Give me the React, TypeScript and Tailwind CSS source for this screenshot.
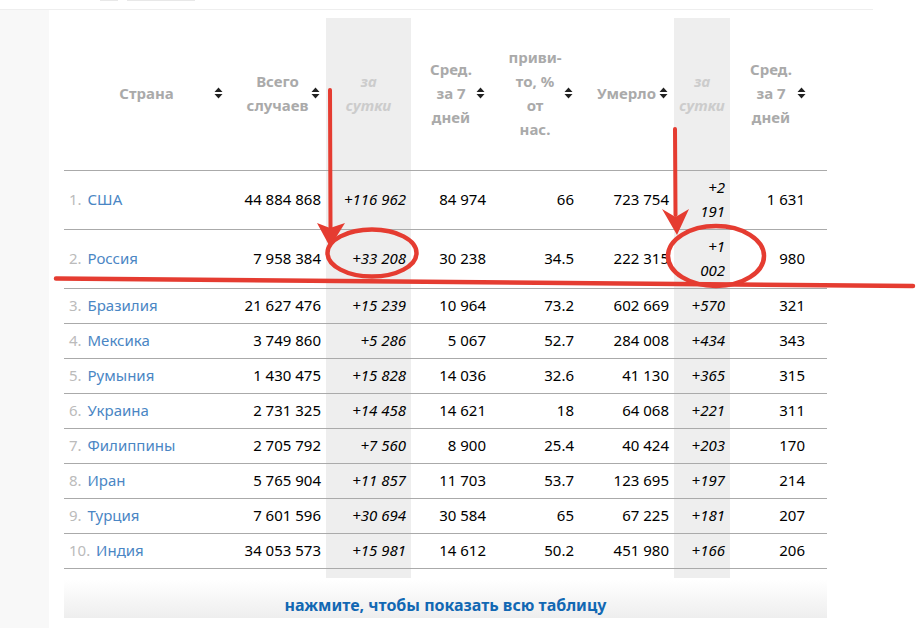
const rows = [
  { n: 1, name: 'США', total: '44 884 868', day: '+116 962', avg: '84 974', vac: '66', dead: '723 754', deadDay: '+2 191', deadAvg: '1 631' },
  { n: 2, name: 'Россия', total: '7 958 384', day: '+33 208', avg: '30 238', vac: '34.5', dead: '222 315', deadDay: '+1 002', deadAvg: '980' },
  { n: 3, name: 'Бразилия', total: '21 627 476', day: '+15 239', avg: '10 964', vac: '73.2', dead: '602 669', deadDay: '+570', deadAvg: '321' },
  { n: 4, name: 'Мексика', total: '3 749 860', day: '+5 286', avg: '5 067', vac: '52.7', dead: '284 008', deadDay: '+434', deadAvg: '343' },
  { n: 5, name: 'Румыния', total: '1 430 475', day: '+15 828', avg: '14 036', vac: '32.6', dead: '41 130', deadDay: '+365', deadAvg: '315' },
  { n: 6, name: 'Украина', total: '2 731 325', day: '+14 458', avg: '14 621', vac: '18', dead: '64 068', deadDay: '+221', deadAvg: '311' },
  { n: 7, name: 'Филиппины', total: '2 705 792', day: '+7 560', avg: '8 900', vac: '25.4', dead: '40 424', deadDay: '+203', deadAvg: '170' },
  { n: 8, name: 'Иран', total: '5 765 904', day: '+11 857', avg: '11 703', vac: '53.7', dead: '123 695', deadDay: '+197', deadAvg: '214' },
  { n: 9, name: 'Турция', total: '7 601 596', day: '+30 694', avg: '30 584', vac: '65', dead: '67 225', deadDay: '+181', deadAvg: '207' },
  { n: 10, name: 'Индия', total: '34 053 573', day: '+15 981', avg: '14 612', vac: '50.2', dead: '451 980', deadDay: '+166', deadAvg: '206' },
]

function SortIcon({ className }: { className: string }) {
  return (
    <svg width="9" height="12" viewBox="0 0 9 12" className={className}>
      <path d="M4.5 0.5 L8.5 5 H0.5 Z M0.5 7 H8.5 L4.5 11.5 Z" fill="#222" />
    </svg>
  )
}

function Head({ children, last }: { children: React.ReactNode; last?: boolean }) {
  return (
    <th className={`relative h-[153px] pt-[5px] pb-[8px] pl-[5px] border-b border-[#aaa] text-center align-middle font-bold text-[#aaa] ${last ? 'pr-[20px]' : 'pr-[5px]'}`}>
      {children}
      <SortIcon className={`absolute top-[69px] ${last ? 'right-[21px]' : 'right-[6px]'}`} />
    </th>
  )
}

function DayHead() {
  return (
    <th className="h-[153px] pt-[5px] pb-[8px] px-[5px] border-b border-[#aaa] bg-[#eee] text-center align-middle font-bold italic text-[#ccc]">
      за<br />сутки
    </th>
  )
}

export default function App() {
  const cell = 'pt-[4px] pb-[6px] pl-[5px] pr-[5px] border-b border-[#aaa] text-right text-black'
  const dayCell = 'pt-[4px] pb-[6px] pr-[5px] pl-[10px] border-b border-[#aaa] bg-[#eee] text-right italic text-black'
  return (
    <div className="relative h-[628px] w-[916px] overflow-hidden bg-white text-[15px] leading-[24px] font-['Noto_Sans',sans-serif]">
      <div className="relative h-[10px] w-[873px] border-b border-[#eee]">
        <div className="absolute left-[100px] top-0 h-[1px] w-[18px] bg-[#e8e8e8]" />
        <div className="absolute left-[127px] top-0 h-[1px] w-[68px] bg-[#e8e8e8]" />
      </div>
      <div className="flex h-[618px]">
        <div className="w-[49px] shrink-0 bg-[#f8f8f8]" />
        <div className="w-[763px] shrink-0 ml-[15px] pt-[8px]">
          <table className="w-[763px] table-fixed border-separate border-spacing-0">
            <colgroup>
              <col className="w-[165px]" />
              <col className="w-[97px]" />
              <col className="w-[85px]" />
              <col className="w-[80px]" />
              <col className="w-[88px]" />
              <col className="w-[95px]" />
              <col className="w-[56px]" />
              <col className="w-[97px]" />
            </colgroup>
            <thead>
              <tr>
                <Head>Страна</Head>
                <Head>Всего<br />случаев</Head>
                <DayHead />
                <Head>Сред.<br />за 7<br />дней</Head>
                <Head>приви-<br />то, %<br />от<br />нас.</Head>
                <Head>Умерло</Head>
                <DayHead />
                <Head last>Сред.<br />за 7<br />дней</Head>
              </tr>
            </thead>
            <tbody>
              {rows.map(r => (
                <tr key={r.n}>
                  <td className="pt-[4px] pb-[6px] px-[5px] border-b border-[#aaa] text-left">
                    <span className="text-[#bbb]">{r.n}. </span>
                    <span className="ml-[2px] text-[#4a86c4]">{r.name}</span>
                  </td>
                  <td className={cell}>{r.total}</td>
                  <td className={dayCell}>{r.day}</td>
                  <td className={cell}>{r.avg}</td>
                  <td className={cell}>{r.vac}</td>
                  <td className={cell}>{r.dead}</td>
                  <td className={dayCell}>{r.deadDay}</td>
                  <td className={`${cell} pr-[22px]`}>{r.deadAvg}</td>
                </tr>
              ))}
            </tbody>
            <tfoot>
              <tr className="h-[9px]">
                <td colSpan={2} />
                <td className="bg-[#eee]" />
                <td colSpan={3} />
                <td className="bg-[#eee]" />
                <td />
              </tr>
            </tfoot>
          </table>
          <div className="mt-[2px] h-[38px] bg-gradient-to-b from-white to-[#eee] pt-[13px] text-center text-[16px] font-bold leading-[24px] text-[#1268b3]">
            нажмите, чтобы показать всю таблицу
          </div>
        </div>
      </div>
      <svg className="absolute left-0 top-0 pointer-events-none" width="916" height="628" fill="none">
        <path d="M330 90 L330.5 228" stroke="#e53c31" strokeWidth="4" strokeLinecap="round" />
        <path d="M317 223 L330 228 L345 223 L330 247 Z" fill="#e53c31" />
        <path d="M675 129 L675.5 215" stroke="#e53c31" strokeWidth="4" strokeLinecap="round" />
        <path d="M662 209 L675.5 217 L689 209 L677 235 Z" fill="#e53c31" />
        <ellipse cx="372" cy="253" rx="44.5" ry="23.5" stroke="#e53c31" strokeWidth="4.5" />
        <ellipse cx="716" cy="256" rx="48" ry="30" stroke="#e53c31" strokeWidth="4.5" />
        <path d="M56 278.5 L913 286" stroke="#e53c31" strokeWidth="4.5" strokeLinecap="round" />
      </svg>
    </div>
  )
}
